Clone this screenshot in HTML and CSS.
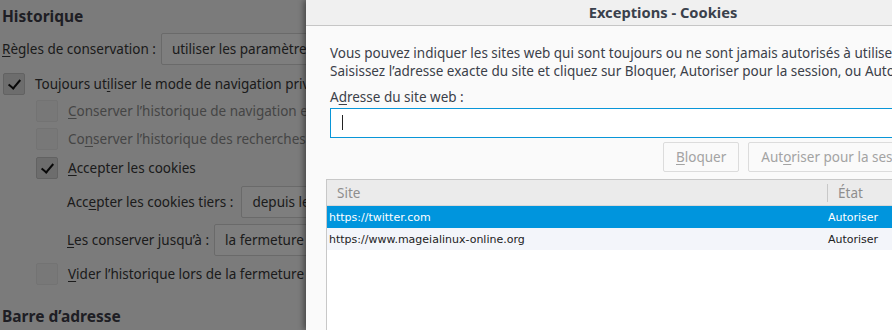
FILE: index.html
```html
<!DOCTYPE html>
<html lang="fr">
<head>
  <meta charset="UTF-8">
  <title>Exceptions - Cookies</title>
  <link rel="stylesheet" href="styles.css">
</head>
<body>
  <div class="prefs">
    <h2>Historique</h2>
    <div class="row">
      <span><u>R</u>ègles de conservation :</span>
      <div class="select">utiliser les paramètres personnalisés pour l’historique</div>
    </div>
    <label class="check first"><span class="box checked"></span><span>Toujours ut<u>i</u>liser le mode de navigation privée</span></label>
    <div class="indent">
      <label class="check disabled c1"><span class="box"></span><span><u>C</u>onserver l’historique de navigation et des téléchargements</span></label>
      <label class="check disabled c2"><span class="box"></span><span>Co<u>n</u>server l’historique des recherches et des formulaires</span></label>
      <label class="check c3"><span class="box checked"></span><span><u>A</u>ccepter les cookies</span></label>
      <div class="row sub first">
        <span>Acc<u>e</u>pter les cookies tiers :</span>
        <div class="select">depuis les sites visités</div>
      </div>
      <div class="row sub">
        <span><u>L</u>es conserver jusqu’à :</span>
        <div class="select">la fermeture de Firefox</div>
      </div>
      <label class="check c4"><span class="box"></span><span><u>V</u>ider l’historique lors de la fermeture de Firefox</span></label>
    </div>
    <h2 class="next">Barre d’adresse</h2>
  </div>

  <div class="overlay"></div>

  <div class="dialog">
    <div class="titlebar">Exceptions - Cookies</div>
    <div class="content">
      <p class="intro">Vous pouvez indiquer les sites web qui sont toujours ou ne sont jamais autorisés à utiliser des cookies.<br>Saisissez l’adresse exacte du site et cliquez sur Bloquer, Autoriser pour la session, ou Autoriser.</p>
      <div class="field-label">A<u>d</u>resse du site web :</div>
      <div class="input"><span class="caret"></span></div>
      <div class="buttons">
        <button><u>B</u>loquer</button>
        <button>Aut<u>o</u>riser pour la session</button>
        <button>Autoriser</button>
      </div>
    </div>
    <div class="table">
      <div class="thead">
        <div class="col-site">Site</div>
        <div class="col-state">État</div>
      </div>
      <div class="tr selected">
        <div class="col-site">https://twitter.com</div>
        <div class="col-state">Autoriser</div>
      </div>
      <div class="tr alt">
        <div class="col-site">https://www.mageialinux-online.org</div>
        <div class="col-state">Autoriser</div>
      </div>
    </div>
  </div>
</body>
</html>
```

FILE: styles.css
```css
* {
  box-sizing: border-box;
}
body {
  margin: 0;
  width: 892px;
  height: 330px;
  overflow: hidden;
  position: relative;
  background-color: #f7f7f7;
  font-family: 'Noto Sans', sans-serif;
  font-size: 13.5px;
  color: #383838;
}
u {
  text-decoration: underline;
  text-underline-offset: 2px;
}

/* page behind the dialog */
.prefs {
  padding: 5px 0 0 2px;
  white-space: nowrap;
}
.prefs h2 {
  margin: 0 0 6px;
  font-size: 15.5px;
  font-weight: bold;
  color: #3d3d48;
}
.prefs h2.next {
  margin-top: 20px;
}
.row {
  display: flex;
  align-items: center;
  gap: 5px;
  height: 32px;
}
.select {
  height: 32px;
  line-height: 30px;
  padding: 0 10px;
  border: 1px solid #d4d4d4;
  border-radius: 2px;
  background-color: #fcfcfc;
}
.check {
  display: flex;
  align-items: center;
  gap: 10px;
  height: 23px;
  margin-left: 1px;
}
.check.disabled {
  color: #8a8a8a;
}
.box {
  flex: none;
  width: 22px;
  height: 22px;
  border: 1px solid #e6e6e6;
  border-radius: 2px;
  background-color: #f1f1f1;
  position: relative;
}
.box.checked {
  background-color: #dadada;
  border-color: #c4c4c4;
}
.box.checked::after {
  content: '';
  position: absolute;
  left: 7px;
  top: 3px;
  width: 5px;
  height: 10px;
  border: solid #111;
  border-width: 0 2px 2px 0;
  transform: rotate(40deg);
}
.check.first {
  margin-top: 7px;
}
.check.c1 {
  margin-top: 4px;
}
.check.c2 {
  margin-top: 5px;
}
.check.c3 {
  margin-top: 6px;
}
.check.c4 {
  margin-top: 7px;
}
.indent {
  padding-left: 33px;
}
.row.sub {
  padding-left: 32px;
  height: 31px;
}
.row.sub.first {
  margin-top: 7px;
  gap: 8px;
}
.row.sub + .row.sub {
  margin-top: 7px;
}

.overlay {
  position: absolute;
  inset: 0;
  background-color: rgba(0, 0, 0, 0.5);
}

/* dialog */
.dialog {
  position: absolute;
  left: 306px;
  top: 0;
  width: 714px;
  height: 100%;
  background-color: #fafafa;
  box-shadow: -2px 0 6px rgba(0, 0, 0, 0.45);
  color: #3b4049;
}
.titlebar {
  height: 26px;
  line-height: 24px;
  text-align: center;
  font-weight: bold;
  font-size: 14.7px;
  color: #3a414c;
  background-color: #f0f0f0;
  border-bottom: 1px solid #c6c6c6;
}
.content {
  padding: 18px 24px 0;
}
.intro {
  margin: 0;
  line-height: 18px;
  white-space: nowrap;
}
.field-label {
  margin-top: 8px;
  line-height: 18px;
}
.input {
  margin-top: 2px;
  height: 30px;
  border: 1px solid #0996d8;
  background-color: #fff;
  padding: 6px 11px;
}
.caret {
  display: block;
  width: 1px;
  height: 15px;
  background-color: #222;
}
.buttons {
  display: flex;
  gap: 9px;
  margin-top: 4px;
  padding-left: 333px;
}
.buttons button {
  height: 30px;
  padding: 0 12px;
  border: 1px solid #dcdcdc;
  border-radius: 2px;
  background-color: #fafafa;
  font-family: inherit;
  font-size: 13.5px;
  color: #a3a3a3;
  white-space: nowrap;
}
.table {
  margin: 7px 0 0 20px;
  height: 200px;
  border-left: 1px solid #c8c8c8;
  border-top: 1px solid #c8c8c8;
  background-color: #fff;
}
.thead {
  display: flex;
  height: 26px;
  align-items: center;
  background-color: #ebebeb;
  border-bottom: 1px solid #d8d8d8;
  color: #8e8e8e;
}
.thead .col-site {
  width: 500px;
  padding-left: 10px;
}
.thead .col-state {
  border-left: 1px solid #c8c8c8;
  padding-left: 10px;
  height: 18px;
  line-height: 18px;
}
.tr {
  display: flex;
  height: 22px;
  align-items: center;
  font-family: 'DejaVu Sans', sans-serif;
  font-size: 11px;
  color: #222;
}
.tr .col-site {
  width: 500px;
  padding-left: 2px;
}
.tr .col-state {
  padding-left: 1px;
}
.tr.selected {
  background-color: #0095dd;
  color: #fff;
}
.tr.alt {
  background-color: #f3f5fa;
}
```
